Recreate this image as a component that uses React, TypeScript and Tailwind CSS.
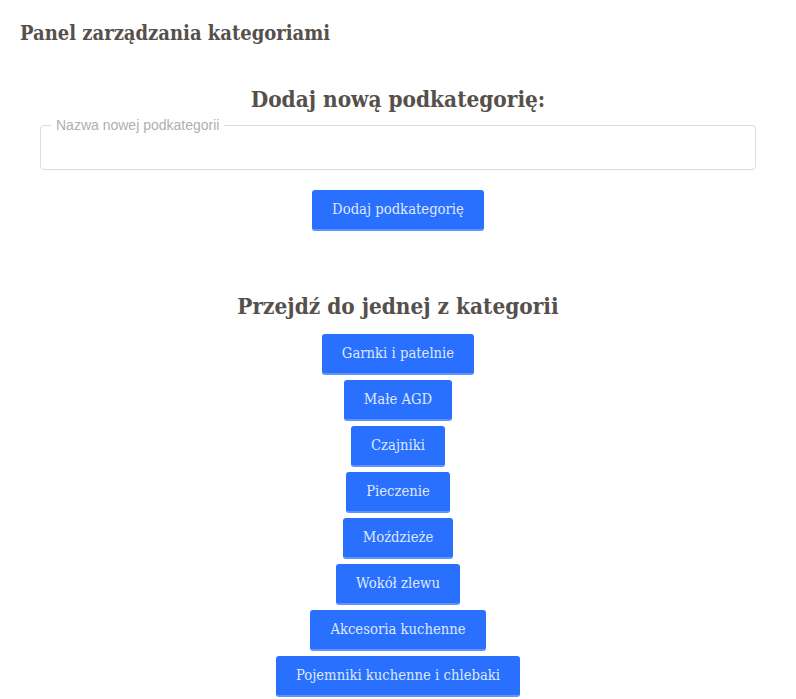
const categories = [
  'Garnki i patelnie',
  'Małe AGD',
  'Czajniki',
  'Pieczenie',
  'Moździeże',
  'Wokół zlewu',
  'Akcesoria kuchenne',
  'Pojemniki kuchenne i chlebaki',
]

const slab = "font-['DejaVu_Serif_Condensed','DejaVu_Serif',serif]"

const BlueButton = ({ label }: { label: string }) => (
  <button className={`${slab} h-[41px] px-5 rounded-[3px] bg-[#2970ff] border-b-2 border-[#5c93ff] text-[14.7px] text-[#dfe8ff]`}>
    {label}
  </button>
)

export default function App() {
  return (
    <div className={`${slab} bg-white min-h-[699px] text-[#56504c]`}>
      <h1 className="pl-5 pt-[18px] text-[20px] font-bold">Panel zarządzania kategoriami</h1>

      <h2 className="mt-[36px] text-center text-[22.4px] font-bold leading-[30px]">Dodaj nową podkategorię:</h2>

      <fieldset className="mx-10 mt-[4px] h-[52px] border border-[#dcdcdc] rounded-[4px] pl-[10px]">
        <legend className="font-['Liberation_Sans',sans-serif] text-[14px] text-[#b0b0b0] px-[5px] leading-[15px]">Nazwa nowej podkategorii</legend>
      </fieldset>

      <div className="flex justify-center mt-[20px]">
        <BlueButton label="Dodaj podkategorię" />
      </div>

      <h2 className="mt-[60px] text-center text-[22.4px] font-bold leading-[30px]">Przejdź do jednej z kategorii</h2>

      <div className="flex flex-col items-center gap-[5px] mt-[13px]">
        {categories.map((c) => (
          <BlueButton key={c} label={c} />
        ))}
      </div>
    </div>
  )
}
